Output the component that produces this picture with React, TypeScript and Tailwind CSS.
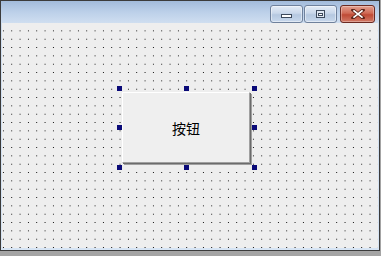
import React from 'react';

const handles = [
  [115, 63], [182, 63], [250, 63],
  [115, 102], [250, 102],
  [115, 142], [182, 142], [250, 142],
];

function DotGrid() {
  return (
    <svg className="absolute inset-0 w-full h-full" shapeRendering="crispEdges">
      <defs>
        <pattern id="dots" width="8.333" height="8.333" patternUnits="userSpaceOnUse">
          <rect x="1.3" y="7" width="1" height="1" fill="#000" />
        </pattern>
      </defs>
      <rect width="100%" height="100%" fill="url(#dots)" />
    </svg>
  );
}

function CaptionButton({ kind }: { kind: 'min' | 'max' | 'close' }) {
  if (kind === 'close') {
    return (
      <div className="w-[35px] h-[18px] rounded-[3px] border border-[#6b2a22] bg-[linear-gradient(#e3a191,#d06a55_45%,#bf4a35_55%,#d27a66)] flex items-center justify-center shadow-[inset_0_0_0_1px_rgba(255,255,255,0.3)]">
        <svg width="14" height="10" viewBox="0 0 14 10">
          <path d="M2 1 L12 9 M12 1 L2 9" stroke="#5a2318" strokeWidth="3.4" strokeLinecap="square" />
          <path d="M2.4 1.4 L11.6 8.6 M11.6 1.4 L2.4 8.6" stroke="#fff" strokeWidth="1.8" />
        </svg>
      </div>
    );
  }
  return (
    <div className="w-[33px] h-[18px] rounded-[3px] border border-[#6f819c] bg-[linear-gradient(#e4ecf6,#c9d7ea_45%,#b5c8e0_55%,#c8d8ec)] flex items-center justify-center shadow-[inset_0_0_0_1px_rgba(255,255,255,0.45)]">
      {kind === 'min' ? (
        <div className="w-[11px] h-[4px] mt-[3px] bg-white border border-[#3d4a5c]" />
      ) : (
        <div className="w-[9px] h-[8px] bg-[#dfe7f2] border border-[#3d4a5c] flex items-center justify-center">
          <div className="w-[5px] h-[3px] border border-[#3d4a5c] bg-white" />
        </div>
      )}
    </div>
  );
}

export default function App() {
  return (
    <div className="w-[381px] h-[256px] bg-[#a4a4a4] overflow-hidden">
      <div className="w-[380px] h-[251px] border border-[#3b3b3b] flex flex-col bg-[#c8d9ee]">
        <div className="h-[22px] shrink-0 bg-[linear-gradient(#a2bbdb,#bcd0e9_50%,#cfdef0)] flex items-start justify-end pr-[4px] pt-[4px] gap-[1px]">
          <CaptionButton kind="min" />
          <CaptionButton kind="max" />
          <div className="w-[1px]" />
          <CaptionButton kind="close" />
        </div>
        <div className="flex-1 px-[1px] pb-[2px] bg-[linear-gradient(#cfdef0,#d6e4f4)]">
          <div className="relative w-full h-full bg-[#eeeeee] overflow-hidden">
            <DotGrid />
            <div className="absolute left-[120px] top-[69px] w-[128px] h-[71px] bg-[#efefef] border-t border-l border-white shadow-[1px_1px_0_#6b6b6b,2px_2px_0_#a0a0a0] border-r border-b border-r-[#a0a0a0] border-b-[#a0a0a0] flex items-center justify-center">
              <span className="text-[14px] text-black font-['Noto_Sans_CJK_SC',sans-serif] leading-none">按钮</span>
            </div>
            {handles.map(([x, y]) => (
              <div
                key={`${x}-${y}`}
                className="absolute w-[5px] h-[5px] bg-[#0a0a78]"
                style={{ left: x, top: y }}
              />
            ))}
          </div>
        </div>
      </div>
    </div>
  );
}
